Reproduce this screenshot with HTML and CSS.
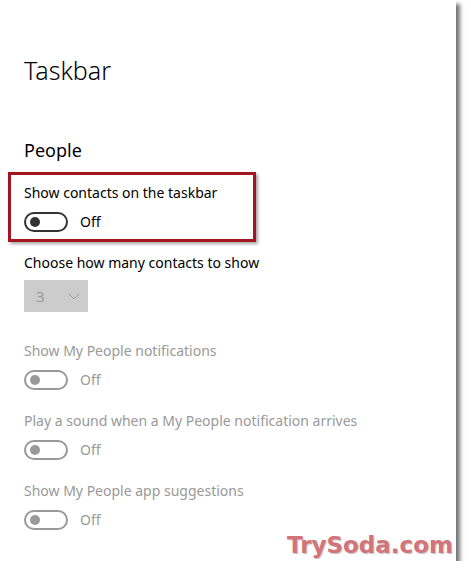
FILE: index.html
```html
<!DOCTYPE html>
<html>
  <head>
    <link rel="stylesheet" href="styles.css">
  </head>
  <body>
    <div class="window">
      <div class="page-title">Taskbar</div>
      <div class="section-title">People</div>

      <div class="highlight">
        <div class="label">Show contacts on the taskbar</div>
        <div class="toggle-row">
          <span class="toggle"><span class="knob"></span></span>
          <span class="state">Off</span>
        </div>
      </div>

      <div class="label after-box">Choose how many contacts to show</div>
      <div class="select disabled">
        <span>3</span>
        <svg width="12" height="7" viewBox="0 0 12 7">
          <path d="M0.5 0.5 L6 6 L11.5 0.5" fill="none" stroke="#9a9a9a" stroke-width="1"/>
        </svg>
      </div>

      <div class="setting disabled">
        <div class="label">Show My People notifications</div>
        <div class="toggle-row">
          <span class="toggle"><span class="knob"></span></span>
          <span class="state">Off</span>
        </div>
      </div>

      <div class="setting disabled">
        <div class="label">Play a sound when a My People notification arrives</div>
        <div class="toggle-row">
          <span class="toggle"><span class="knob"></span></span>
          <span class="state">Off</span>
        </div>
      </div>

      <div class="setting disabled">
        <div class="label">Show My People app suggestions</div>
        <div class="toggle-row">
          <span class="toggle"><span class="knob"></span></span>
          <span class="state">Off</span>
        </div>
      </div>

      <div class="watermark">TrySoda.com</div>
    </div>
  </body>
</html>
```

FILE: styles.css
```css
body {
  margin: 0;
  background: white;
  font-family: "Noto Sans", "Open Sans", sans-serif;
  color: #000;
}

.window {
  width: 456px;
  height: 561px;
  box-sizing: border-box;
  padding: 52px 0 0 24px;
  background: white;
  box-shadow: 4px 4px 4px rgba(0, 0, 0, 0.55);
  display: flex;
  flex-direction: column;
}

.page-title {
  font-size: 25px;
  font-weight: 300;
  line-height: 36px;
  height: 36px;
}

.section-title {
  margin-top: 48px;
  font-size: 18px;
  line-height: 28px;
  height: 28px;
}

.label {
  font-size: 14px;
  line-height: 20px;
  height: 20px;
  white-space: nowrap;
}

.highlight {
  margin: 8px 0 0 -16px;
  width: 248px;
  height: 70px;
  box-sizing: border-box;
  border: 3px solid #a3161f;
  padding: 8px 0 0 13px;
  box-shadow: 2px 2px 3px rgba(0, 0, 0, 0.35);
}

.toggle-row {
  margin-top: 9px;
  height: 20px;
  display: flex;
  align-items: center;
  gap: 12px;
}

.toggle {
  width: 44px;
  height: 20px;
  box-sizing: border-box;
  border: 2px solid #333;
  border-radius: 10px;
  display: flex;
  align-items: center;
  padding-left: 4px;
}

.knob {
  width: 10px;
  height: 10px;
  border-radius: 50%;
  background: #333;
}

.state {
  font-size: 14px;
  line-height: 20px;
}

.after-box {
  margin-top: 11px;
}

.select {
  margin-top: 7px;
  width: 64px;
  height: 32px;
  background: #cccccc;
  display: flex;
  align-items: center;
  gap: 23px;
  padding-left: 12px;
  box-sizing: border-box;
  font-size: 15px;
  color: #9a9a9a;
}

.setting {
  margin-top: 29px;
}

.setting + .setting {
  margin-top: 21px;
}

.disabled .label,
.disabled .state {
  color: #999;
}

.disabled .toggle {
  border-color: #999;
}

.disabled .knob {
  background: #999;
}

.watermark {
  margin-top: auto;
  margin-bottom: 3px;
  align-self: flex-end;
  margin-right: 3px;
  font-family: "DejaVu Sans", "Liberation Sans", sans-serif;
  font-weight: bold;
  font-size: 23px;
  line-height: 26px;
  color: #d27479;
  text-shadow: 1px 1px 1px rgba(0, 0, 0, 0.25);
}
```
